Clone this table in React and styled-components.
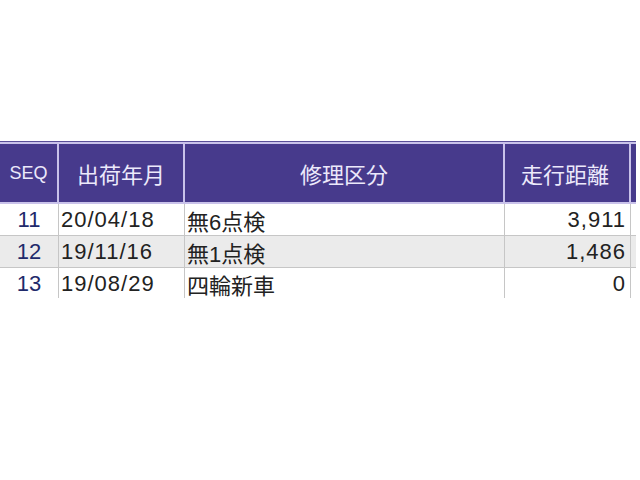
import React from "react";
import styled, { createGlobalStyle } from "styled-components";

const rows = [
    { seq: 11, date: "20/04/18", kind: "無6点検", km: "3,911" },
    { seq: 12, date: "19/11/16", kind: "無1点検", km: "1,486" },
    { seq: 13, date: "19/08/29", kind: "四輪新車", km: "0" },
];

const GlobalStyle = createGlobalStyle`
    body {
        margin: 0;
        background: #fff;
        font-family: "Liberation Sans", "Noto Sans CJK JP", sans-serif;
    }
`;

const Page = styled.div`
    width: 640px;
    height: 480px;
    padding-top: 141px;
    box-sizing: border-box;
`;

const Table = styled.div`
    width: 636px;
    height: 157px;
    overflow: hidden;
`;

const cols = "59px 126px 320px 126px 5px";

const HeaderRow = styled.div`
    display: grid;
    grid-template-columns: ${cols};
    height: 63px;
    background: #473a8c;
    border-top: 1px solid #5a4f98;
    border-bottom: 2px solid #c9c2ea;
    box-shadow: inset 0 2px 0 #c9c2ea;
    padding-top: 2px;
    box-sizing: border-box;
`;

const HeadCell = styled.div`
    display: flex;
    align-items: center;
    justify-content: ${(p) => p.$align || "center"};
    padding-right: ${(p) => (p.$align === "flex-end" ? "20px" : "0")};
    border-right: 2px solid #c9c2ea;
    color: #ece9fb;
    font-size: ${(p) => (p.$small ? "18px" : "22px")};
    white-space: nowrap;
    &:last-child {
        border-right: none;
    }
`;

const Row = styled.div`
    display: grid;
    grid-template-columns: ${cols};
    height: 32px;
    background: ${(p) => (p.$alt ? "#ebebeb" : "#fff")};
    border-bottom: 1px solid #c6c6c6;
    box-sizing: border-box;
`;

const Cell = styled.div`
    display: flex;
    align-items: center;
    justify-content: ${(p) => p.$align || "flex-start"};
    padding: 0 ${(p) => (p.$align === "flex-end" ? "4px" : "2px")};
    border-right: 1px solid #c6c6c6;
    color: ${(p) => (p.$seq ? "#1f2a6b" : "#222")};
    font-size: 22px;
    letter-spacing: ${(p) => (p.$num ? "1px" : "0")};
    white-space: nowrap;
    &:last-child {
        border-right: none;
    }
`;

export default function App() {
    return (
        <Page>
            <GlobalStyle />
            <Table>
                <HeaderRow>
                    <HeadCell $small>SEQ</HeadCell>
                    <HeadCell>出荷年月</HeadCell>
                    <HeadCell>修理区分</HeadCell>
                    <HeadCell $align="flex-end">走行距離</HeadCell>
                    <HeadCell />
                </HeaderRow>
                {rows.map((r, i) => (
                    <Row key={r.seq} $alt={i % 2 === 1}>
                        <Cell $align="center" $seq>
                            {r.seq}
                        </Cell>
                        <Cell $num>{r.date}</Cell>
                        <Cell>{r.kind}</Cell>
                        <Cell $align="flex-end" $num>
                            {r.km}
                        </Cell>
                        <Cell />
                    </Row>
                ))}
            </Table>
        </Page>
    );
}
